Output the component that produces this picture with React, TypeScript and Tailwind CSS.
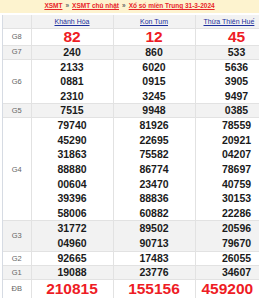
import React from 'react';

interface Row {
  label: string;
  values: string[][];
  kind?: 'g8' | 'db';
}

const rows: Row[] = [
  { label: 'G8', values: [['82'], ['12'], ['45']], kind: 'g8' },
  { label: 'G7', values: [['240'], ['860'], ['533']] },
  { label: 'G6', values: [['2133', '0881', '2310'], ['6020', '0915', '3245'], ['5636', '3905', '9497']] },
  { label: 'G5', values: [['7515'], ['9948'], ['0385']] },
  {
    label: 'G4',
    values: [
      ['79740', '45290', '31863', '88880', '00604', '39396', '58006'],
      ['81926', '22695', '75582', '86774', '23470', '88836', '60882'],
      ['78559', '20921', '04207', '78697', '40759', '30153', '22286']
    ]
  },
  { label: 'G3', values: [['31772', '04960'], ['89502', '90713'], ['20596', '79670']] },
  { label: 'G2', values: [['92665'], ['17483'], ['26055']] },
  { label: 'G1', values: [['19088'], ['23776'], ['34607']] },
  { label: 'ĐB', values: [['210815'], ['155156'], ['459200']], kind: 'db' }
];

const provinces = ['Khánh Hòa', 'Kon Tum', 'Thừa Thiên Huế'];

const lineClass = (r: Row) => {
  if (r.kind === 'g8') return 'h-[16px] leading-[16px] text-[15.5px] font-bold text-[#ee1c25]';
  if (r.kind === 'db') return 'h-[18px] leading-[18px] text-[15.5px] font-bold text-[#ee1c25]';
  if (r.values[0].length === 1) return 'h-[13px] leading-[13px] text-[10.5px] font-bold text-[#1b1b1b]';
  return 'h-[14.6px] leading-[14.6px] text-[10.5px] font-bold text-[#1b1b1b]';
};

const App = () => {
  return <div className="w-[259px] h-[300px] overflow-hidden bg-white font-['Liberation_Sans',Arial,sans-serif]">
      <div className="h-[13px] bg-[#fdf3cf] flex items-center justify-center text-[6.5px] font-bold leading-none text-[#666] whitespace-nowrap">
        <a className="text-[#e8262a] underline">XSMT</a>
        <span className="mx-[3px]">»</span>
        <a className="text-[#e8262a] underline">XSMT chủ nhật</a>
        <span className="mx-[3px]">»</span>
        <a className="text-[#e8262a] underline">Xổ số miền Trung 31-3-2024</a>
      </div>
      <div className="mt-[2px] ml-[2px] border-l border-[#d6dbe3]">
        <table className="w-[284px] border-collapse table-fixed">
          <colgroup>
            <col className="w-[28px]" />
            <col className="w-[82px]" />
            <col className="w-[82px]" />
            <col className="w-[92px]" />
          </colgroup>
          <thead>
            <tr className="h-[13px] bg-[#f2f2f2]">
              <th className="p-0 border-r border-[#e2e2e2]" />
              {provinces.map((p, i) => <th key={p} className={`p-0 font-normal text-[7px] leading-none ${i < 2 ? 'border-r border-[#e2e2e2]' : ''}`}>
                  <div className={i === 2 ? 'pl-[8px] text-left' : 'text-center'}>
                    <a className="text-[#1c2f9c] underline">{p}</a>
                  </div>
                </th>)}
            </tr>
          </thead>
          <tbody>
            {rows.map((r, ri) => <tr key={r.label} className={`border-t border-[#e2e2e2] ${ri % 2 === 1 ? 'bg-[#f2f2f2]' : 'bg-white'}`}>
                <td className="p-0 text-center text-[7.5px] text-[#666] border-r border-[#e2e2e2] align-middle">
                  {r.label}
                </td>
                {r.values.map((vals, ci) => <td key={ci} className={`p-0 align-middle ${ci < 2 ? 'border-r border-[#e2e2e2]' : ''}`}>
                    <div className={`flex flex-col ${ci < 2 ? 'items-center' : r.kind === 'db' ? 'items-start pl-[6px]' : 'w-[82px] items-center'}`}>
                      {vals.map(v => <div key={v} className={lineClass(r)}>
                          {v}
                        </div>)}
                    </div>
                  </td>)}
              </tr>)}
          </tbody>
        </table>
      </div>
    </div>;
};

export default App;
